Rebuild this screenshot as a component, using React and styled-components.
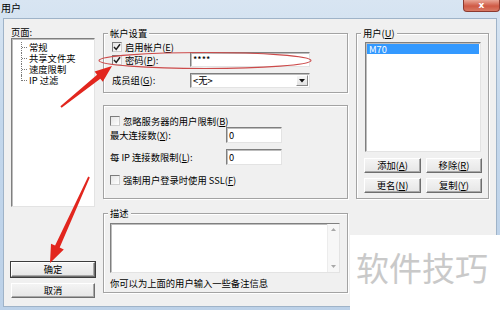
import styled, { createGlobalStyle } from "styled-components";

const GlobalStyle = createGlobalStyle`
  html, body {
    margin: 0;
    padding: 0;
    background: #fff;
  }
  body {
    font-family: "Noto Sans CJK SC", "Noto Sans", sans-serif;
    font-size: 9.3px;
    color: #000;
  }
  * {
    box-sizing: border-box;
  }
`;

const Screen = styled.div`
  position: relative;
  width: 500px;
  height: 310px;
  overflow: hidden;
  background: linear-gradient(180deg, #d8e5f2 0%, #c3d7ec 40%, #bcd1e8 100%);
  display: flex;
  flex-direction: column;
`;

const TitleBar = styled.div`
  height: 18px;
  flex: none;
  display: flex;
  align-items: flex-start;
  padding-left: 1px;
`;

const Title = styled.span`
  margin-top: 2px;
  font-size: 10px;
  line-height: 12px;
`;

const CloseBtn = styled.div`
  margin-left: auto;
  width: 37px;
  height: 12px;
  border: 1px solid #8c3a2f;
  border-top: none;
  border-radius: 0 0 4px 4px;
  background: linear-gradient(180deg, #e9a797 0%, #cf5a45 55%, #d97a64 100%);
  color: #fff;
  font: bold 9px/10px "DejaVu Sans", sans-serif;
  text-align: center;
`;

const Body = styled.div`
  margin: 0 3px;
  height: 289px;
  background: #f0f0f0;
  border: 1px solid #9fb3c8;
  padding: 8px 7px;
  display: grid;
  grid-template-columns: 84px 245px 133px;
  column-gap: 8px;
`;

const Column = styled.div`
  display: flex;
  flex-direction: column;
`;

const Label = styled.span`
  line-height: 11px;
  white-space: nowrap;
`;

const Sunken = styled.div`
  background: #fff;
  border: 1px solid;
  border-color: #7f7f7f #e3e3e3 #e3e3e3 #7f7f7f;
  box-shadow: inset 1px 1px #bdbdbd;
`;

const PageList = styled(Sunken)`
  height: 169px;
  padding: 3px 0 0 1px;
`;

const TreeItem = styled.div`
  position: relative;
  height: 11px;
  line-height: 11px;
  padding-left: 16px;
  white-space: nowrap;

  &::before {
    content: "";
    position: absolute;
    left: 8px;
    top: 0;
    height: ${({ $last }) => ($last ? "6px" : "11px")};
    border-left: 1px dotted #7a7a7a;
  }

  &::after {
    content: "";
    position: absolute;
    left: 9px;
    top: 5px;
    width: 5px;
    border-top: 1px dotted #7a7a7a;
  }
`;

const Button = styled.div`
  height: 15px;
  line-height: 13px;
  text-align: center;
  white-space: nowrap;
  background: linear-gradient(180deg, #f4f4f4, #e6e6e6);
  border: 1px solid;
  border-color: #ffffff #6e6e6e #6e6e6e #ffffff;
  box-shadow: ${({ $default }) =>
    $default ? "0 0 0 1px #3c3c3c, inset -1px -1px #a8a8a8" : "inset -1px -1px #a8a8a8"};
`;

const LeftButtons = styled.div`
  margin-top: auto;
  display: flex;
  flex-direction: column;
  gap: 6px;
`;

const Group = styled.div`
  position: relative;
  margin-top: ${({ $top }) => $top}px;
  height: ${({ $h }) => $h}px;
  border: 1px solid #a3a3a3;
  box-shadow: inset 1px 1px #fff, 1px 1px #fff;
  padding: ${({ $pad }) => $pad};
`;

const Legend = styled.span`
  position: absolute;
  top: -6px;
  left: 4px;
  padding: 0 2px;
  background: #f0f0f0;
  line-height: 11px;
  white-space: nowrap;
`;

const CheckRow = styled.div`
  display: flex;
  align-items: center;
  gap: 3px;
  height: 10px;
  margin-top: ${({ $top }) => $top || 0}px;
  line-height: 10px;
  white-space: nowrap;
`;

const Box = styled.span`
  flex: none;
  width: 10px;
  height: 10px;
  border: 1px solid;
  border-color: #7b7b7b #cfcfcf #cfcfcf #7b7b7b;
  background: linear-gradient(135deg, #e4e4e4, #ffffff);
  display: inline-flex;
  align-items: center;
  justify-content: center;
`;

const FieldRow = styled.div`
  display: grid;
  grid-template-columns: ${({ $label }) => $label}px ${({ $field }) => $field}px;
  align-items: center;
  height: ${({ $h }) => $h}px;
  margin-top: ${({ $top }) => $top || 0}px;
`;

const TextBox = styled(Sunken)`
  height: 100%;
  display: flex;
  align-items: center;
  padding-left: 2px;
  line-height: 11px;
`;

const SelectBox = styled(TextBox)`
  justify-content: space-between;
  padding-right: 1px;
`;

const DropBtn = styled.span`
  width: 12px;
  height: 11px;
  background: linear-gradient(180deg, #f6f6f6, #e2e2e2);
  border: 1px solid;
  border-color: #fff #8a8a8a #8a8a8a #fff;
  display: flex;
  align-items: center;
  justify-content: center;
`;

const NoteArea = styled(Sunken)`
  height: 50px;
  display: flex;
  justify-content: flex-end;
`;

const ScrollBar = styled.div`
  width: 12px;
  background: #f7f7f7;
  border-left: 1px solid #ececec;
  display: flex;
  flex-direction: column;
  justify-content: space-between;
  align-items: center;
  padding: 4px 0;
`;

const Caption = styled.div`
  margin-top: 5px;
  line-height: 11px;
  white-space: nowrap;
`;

const UserList = styled(Sunken)`
  height: 110px;
  padding: 1px;
`;

const Selected = styled.div`
  height: 10px;
  line-height: 10px;
  padding-left: 2px;
  background: #3399ff;
  color: #fff;
`;

const ButtonGrid = styled.div`
  margin: 6px 0 0 -1px;
  display: grid;
  grid-template-columns: 57px 56px;
  column-gap: 5px;
  row-gap: 5px;
`;

const Overlay = styled.svg`
  position: absolute;
  left: 0;
  top: 0;
  pointer-events: none;
`;

const Watermark = styled.div`
  position: absolute;
  left: 350px;
  top: 235px;
  width: 150px;
  height: 75px;
  background: #fff;
  color: #c9c9c9;
  font-size: 33px;
  line-height: 33px;
  padding: 16px 0 0 6px;
  white-space: nowrap;
`;

const Check = ({ checked }) => (
  <Box>
    {checked && (
      <svg width="8" height="8" viewBox="0 0 8 8">
        <path d="M1 4 L3.2 6.4 L7 1.2" fill="none" stroke="#1e1e1e" strokeWidth="1.5" />
      </svg>
    )}
  </Box>
);

const Key = ({ k }) => (
  <>
    (<u>{k}</u>)
  </>
);

export default function App() {
  return (
    <Screen>
      <GlobalStyle />
      <TitleBar>
        <Title>用户</Title>
        <CloseBtn>x</CloseBtn>
      </TitleBar>

      <Body>
        <Column>
          <Label>页面:</Label>
          <PageList>
            <TreeItem>常规</TreeItem>
            <TreeItem>共享文件夹</TreeItem>
            <TreeItem>速度限制</TreeItem>
            <TreeItem $last>IP 过滤</TreeItem>
          </PageList>
          <LeftButtons>
            <Button $default>确定</Button>
            <Button>取消</Button>
          </LeftButtons>
        </Column>

        <Column>
          <Group $top={6} $h={60} $pad="8px 0 0 8px">
            <Legend>帐户设置</Legend>
            <CheckRow>
              <Check checked />
              <span>
                启用帐户<Key k="E" />
              </span>
            </CheckRow>
            <FieldRow $label={78} $field={120} $h={15}>
              <CheckRow>
                <Check checked />
                <span>
                  密码<Key k="P" />:
                </span>
              </CheckRow>
              <TextBox>****</TextBox>
            </FieldRow>
            <FieldRow $label={78} $field={120} $h={15} $top={6}>
              <Label>
                成员组<Key k="G" />:
              </Label>
              <SelectBox>
                <span>&lt;无&gt;</span>
                <DropBtn>
                  <svg width="6" height="4" viewBox="0 0 6 4">
                    <path d="M0 0 H6 L3 3.5 Z" fill="#111" />
                  </svg>
                </DropBtn>
              </SelectBox>
            </FieldRow>
          </Group>

          <Group $top={12} $h={94} $pad="10px 0 0 6px">
            <CheckRow>
              <Check />
              <span>
                忽略服务器的用户限制<Key k="B" />
              </span>
            </CheckRow>
            <FieldRow $label={116} $field={56} $h={16} $top={1}>
              <Label>
                最大连接数<Key k="X" />:
              </Label>
              <TextBox>0</TextBox>
            </FieldRow>
            <FieldRow $label={116} $field={56} $h={16} $top={6}>
              <Label>
                每 IP 连接数限制<Key k="L" />:
              </Label>
              <TextBox>0</TextBox>
            </FieldRow>
            <CheckRow $top={10}>
              <Check />
              <span>
                强制用户登录时使用 SSL<Key k="F" />
              </span>
            </CheckRow>
          </Group>

          <Group $top={14} $h={80} $pad="9px 7px 0 6px">
            <Legend>描述</Legend>
            <NoteArea>
              <ScrollBar>
                <svg width="5" height="3" viewBox="0 0 5 3">
                  <path d="M0 3 H5 L2.5 0 Z" fill="#a8a8a8" />
                </svg>
                <svg width="5" height="3" viewBox="0 0 5 3">
                  <path d="M0 0 H5 L2.5 3 Z" fill="#a8a8a8" />
                </svg>
              </ScrollBar>
            </NoteArea>
            <Caption>你可以为上面的用户输入一些备注信息</Caption>
          </Group>
        </Column>

        <Column>
          <Group $top={6} $h={166} $pad="8px 7px 0 8px">
            <Legend>
              用户<Key k="U" />
            </Legend>
            <UserList>
              <Selected>M70</Selected>
            </UserList>
            <ButtonGrid>
              <Button>
                添加<Key k="A" />
              </Button>
              <Button>
                移除<Key k="R" />
              </Button>
              <Button>
                更名<Key k="N" />
              </Button>
              <Button>
                复制<Key k="Y" />
              </Button>
            </ButtonGrid>
          </Group>
        </Column>
      </Body>

      <Overlay width="500" height="310" viewBox="0 0 500 310">
        <ellipse cx="205" cy="60.5" rx="106" ry="8" fill="none" stroke="#cc4a4a" strokeWidth="1.1" />
        <polygon
          points="60.4,106.2 97.1,74.7 94.6,71.6 112,66 102.8,81.8 100.3,78.7 61.6,107.8"
          fill="#e2261e"
        />
        <polygon
          points="88.2,176.6 55.1,245.6 51,243.7 50,263 63.8,249.5 59.7,247.6 89.8,177.4"
          fill="#e2261e"
        />
      </Overlay>

      <Watermark>软件技巧</Watermark>
    </Screen>
  );
}
